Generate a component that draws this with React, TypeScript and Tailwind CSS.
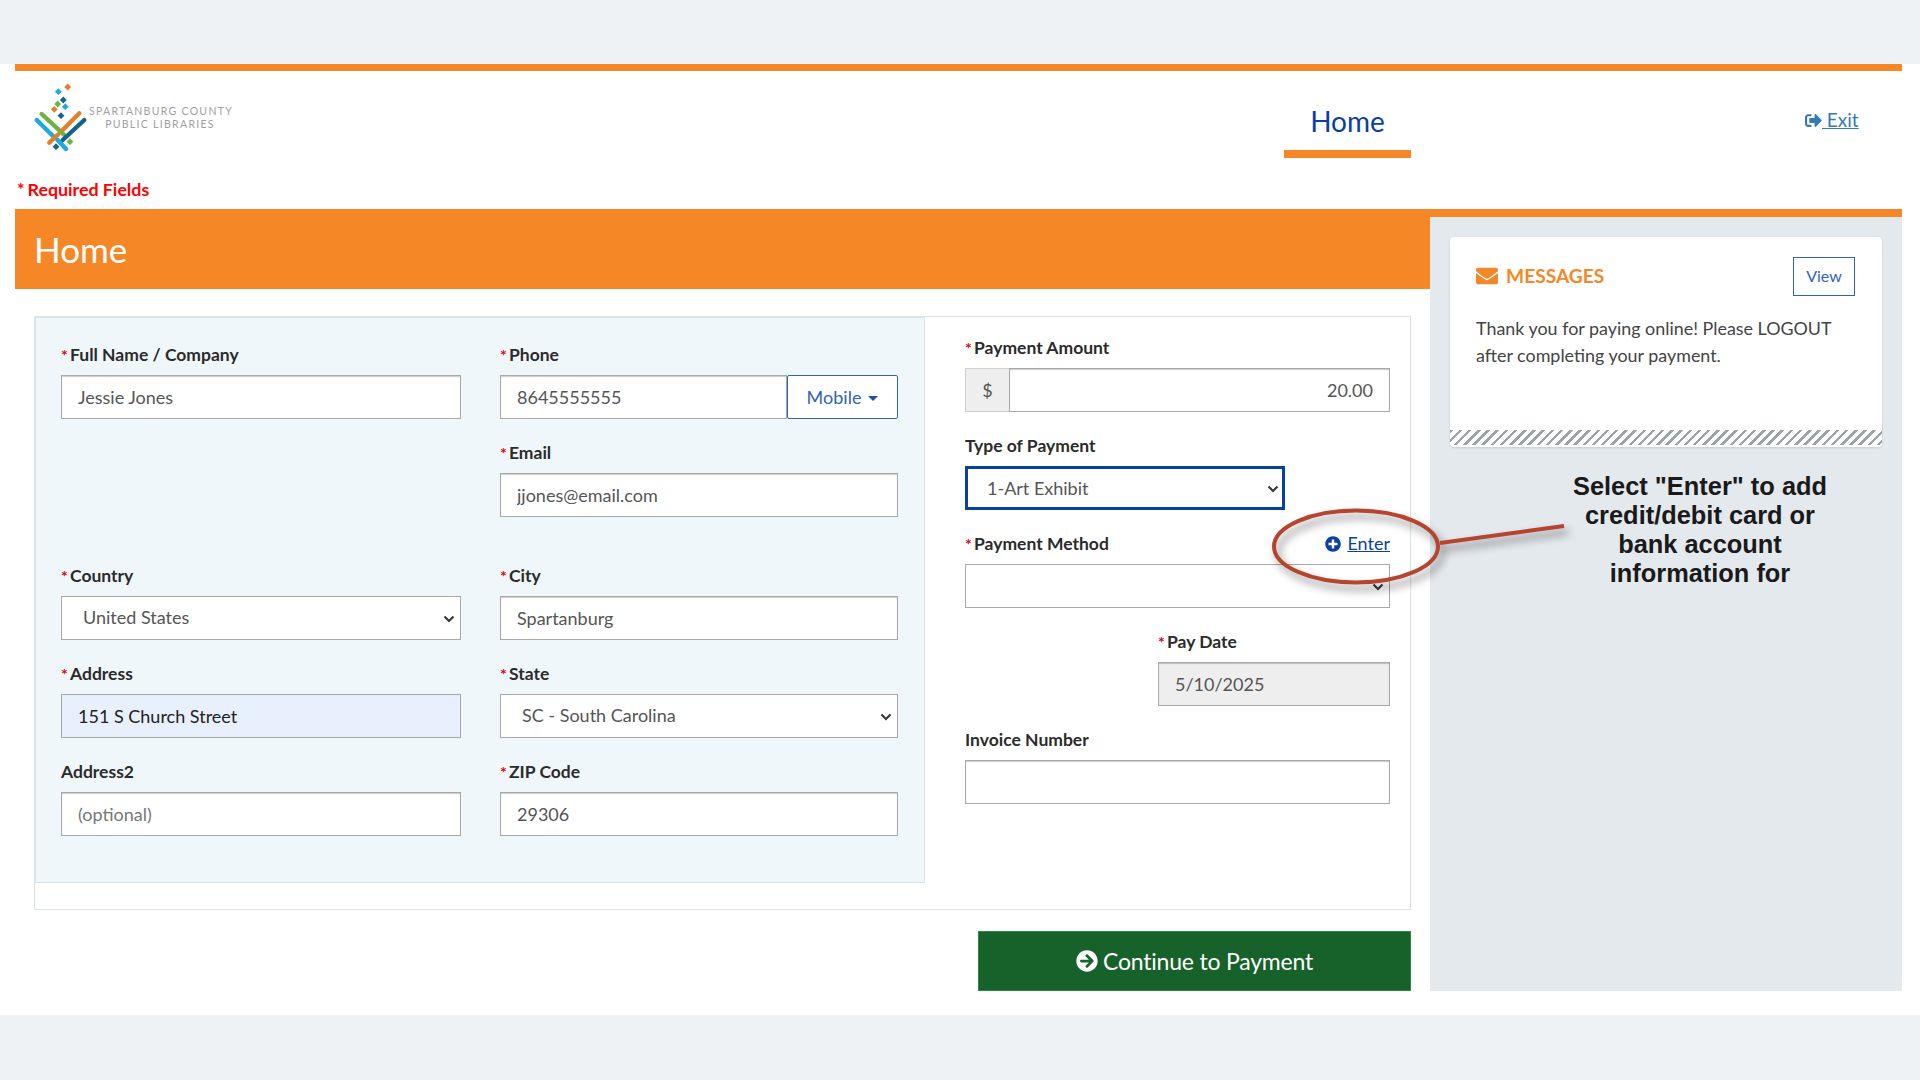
import type { ReactNode } from "react";
import { FaArrowCircleRight, FaEnvelope, FaPlusCircle, FaSignOutAlt } from "react-icons/fa";

const inputClass =
  "h-[44px] w-full border border-[#a8a8a8] bg-white px-4 pb-[1px] text-[18px] text-[#555] shadow-[inset_0_1px_1px_rgba(0,0,0,0.2)] outline-none";
const selectClass =
  "h-[44px] w-full appearance-none border border-[#a8a8a8] bg-white pb-[1px] pl-[21px] text-[18px] text-[#555] outline-none";

function Field({
  label,
  required,
  className,
  extra,
  children,
}: {
  label: string;
  required?: boolean;
  className?: string;
  extra?: ReactNode;
  children: ReactNode;
}) {
  return (
    <div className={className}>
      <div className="mb-2 flex h-[25px] items-center justify-between">
        <label className="text-[17.5px] font-bold leading-[25px] text-[#2b2b2b]">
          {required && <span className="inline-block w-[9px] text-[16px] text-[#e3000f]">*</span>}
          {label}
        </label>
        {extra}
      </div>
      {children}
    </div>
  );
}

function SelectBox({ className, children }: { className?: string; children?: ReactNode }) {
  return (
    <div className="relative">
      <select className={className ?? selectClass}>{children}</select>
      <svg
        viewBox="0 0 12 8"
        className="pointer-events-none absolute right-[6px] top-[19px] h-[8px] w-[12px]"
      >
        <path d="M1.5 1.5L6 6L10.5 1.5" fill="none" stroke="#3a3a3a" strokeWidth="2.2" />
      </svg>
    </div>
  );
}

function Logo() {
  const bars = [
    { d: "M40.7 114L62.7 134.3", c: "#6cb33f" },
    { d: "M35.7 120L54.3 138.3", c: "#1fa9e1" },
    { d: "M78.3 113.3L61.7 130", c: "#e2812d" },
    { d: "M83.3 120L61.7 140", c: "#14638c" },
    { d: "M48.3 142.7L57.3 134.3", c: "#e2812d" },
    { d: "M56.7 140L65 149", c: "#1fa9e1" },
  ];
  const dots = [
    { x: 66.7, y: 87, c: "#e2812d" },
    { x: 57.3, y: 91.7, c: "#1fa9e1" },
    { x: 62.3, y: 100, c: "#14638c" },
    { x: 56.7, y: 104, c: "#6cb33f" },
    { x: 64.3, y: 106.7, c: "#1fa9e1" },
    { x: 53.3, y: 109.3, c: "#e2812d" },
    { x: 60, y: 115.7, c: "#14638c" },
    { x: 55, y: 146.7, c: "#14638c" },
    { x: 69, y: 141.7, c: "#6cb33f" },
  ];
  return (
    <svg viewBox="32 82 56 70" className="mt-[11px] h-[70px] w-[56px] shrink-0">
      {bars.map((b) => (
        <path key={b.d} d={b.d} stroke={b.c} strokeWidth="4.4" strokeLinecap="round" fill="none" />
      ))}
      {dots.map((p) => (
        <rect
          key={`${p.x}-${p.y}`}
          x={p.x - 2.4}
          y={p.y - 2.4}
          width="4.8"
          height="4.8"
          fill={p.c}
          transform={`rotate(45 ${p.x} ${p.y})`}
        />
      ))}
    </svg>
  );
}

export default function App() {
  return (
    <div className="relative flex h-[1080px] w-full flex-col overflow-hidden bg-[#eff2f5] pt-[64px] font-['Lato','Noto_Sans',sans-serif]">
      <div className="h-[951px] bg-white pl-[15px] pr-[18px]">
        <div className="h-[7px] bg-[#f58727]" />

        <header className="h-[138px]">
          <div className="flex h-[87px] items-start">
            <div className="ml-[18px] flex">
              <Logo />
              <div className="mt-[34px] w-[142px] whitespace-nowrap text-center text-[10.5px] leading-[12.5px] tracking-[1.3px] text-[#a0a0a0]">
                <div>SPARTANBURG COUNTY</div>
                <div>PUBLIC LIBRARIES</div>
              </div>
            </div>
            <nav className="ml-[1053px] flex h-[87px] w-[127px] flex-col">
              <a className="flex h-[79px] justify-center pt-[30px] text-[28px] leading-[40px] text-[#0b3fa3]">
                Home
              </a>
              <div className="h-[8px] bg-[#f58727]" />
            </nav>
            <a className="ml-[394px] mt-[37px] flex items-center text-[19px] leading-[24px] text-[#337ab7] underline">
              <FaSignOutAlt className="h-[17px] w-[17px]" />
              <span className="whitespace-pre"> Exit</span>
            </a>
          </div>
          <div className="pl-[2px] pt-[19px] text-[17.8px] font-bold leading-[24px] text-[#ff0000]">
            <span className="mr-[3px]">*</span>Required Fields
          </div>
        </header>

        <div className="flex h-[782px]">
          <main className="flex w-[1415px] flex-col">
            <div className="flex h-[80px] items-center bg-[#f58727] pl-[19px] pt-[1px] text-[35px] text-white">Home</div>

            <div className="ml-[19px] mt-[27px] flex h-[594px] w-[1377px] border border-[#dbe3e6]">
              <section className="h-[566px] w-[890px] border border-[#d3e6ec] bg-[#f0f7fa] pl-[25px] pt-[24px]">
                <div className="grid grid-cols-[400px_398px] gap-x-[39px] gap-y-[21px]">
                  <Field label="Full Name / Company" required>
                    <input className={inputClass} defaultValue="Jessie Jones" />
                  </Field>
                  <Field label="Phone" required>
                    <div className="flex">
                      <input className={inputClass} defaultValue="8645555555" />
                      <button className="flex h-[44px] w-[111px] shrink-0 items-center justify-center gap-[7px] rounded-[2px] border border-[#2f63b8] bg-white text-[18px] text-[#2f63b8]">
                        Mobile
                        <span className="mt-[3px] h-0 w-0 border-x-[5px] border-t-[5px] border-x-transparent border-t-[#1c4fa8]" />
                      </button>
                    </div>
                  </Field>
                  <div />
                  <Field label="Email" required>
                    <input className={inputClass} defaultValue="jjones@email.com" />
                  </Field>
                  <Field label="Country" required className="mt-[25px]">
                    <SelectBox>
                      <option>United States</option>
                    </SelectBox>
                  </Field>
                  <Field label="City" required className="mt-[25px]">
                    <input className={inputClass} defaultValue="Spartanburg" />
                  </Field>
                  <Field label="Address" required>
                    <input
                      className="h-[44px] w-full border border-[#a8a8a8] bg-[#e8f0fe] px-4 pb-[1px] text-[18px] text-[#222] outline-none"
                      defaultValue="151 S Church Street"
                    />
                  </Field>
                  <Field label="State" required>
                    <SelectBox>
                      <option>SC - South Carolina</option>
                    </SelectBox>
                  </Field>
                  <Field label="Address2">
                    <input className={`${inputClass} placeholder:text-[#777]`} placeholder="(optional)" />
                  </Field>
                  <Field label="ZIP Code" required>
                    <input className={inputClass} defaultValue="29306" />
                  </Field>
                </div>
              </section>

              <section className="flex-1 pl-[40px] pr-[20px] pt-[18px]">
                <div className="flex flex-col gap-y-[21px]">
                  <Field label="Payment Amount" required>
                    <div className="flex">
                      <span className="flex h-[44px] w-[44px] shrink-0 items-center justify-center border border-r-0 border-[#cfcfcf] bg-[#eeeeee] text-[18px] text-[#555]">
                        $
                      </span>
                      <input className={`${inputClass} text-right`} defaultValue="20.00" />
                    </div>
                  </Field>
                  <Field label="Type of Payment">
                    <div className="w-[320px]">
                      <SelectBox className="h-[44px] w-full appearance-none border-[3px] border-[#0b3fa3] bg-white pl-[19px] text-[18px] text-[#555] outline-none">
                        <option>1-Art Exhibit</option>
                      </SelectBox>
                    </div>
                  </Field>
                  <Field
                    label="Payment Method"
                    required
                    extra={
                      <a className="flex items-center gap-[6px] text-[18px] leading-[25px] text-[#0b3fa3]">
                        <FaPlusCircle className="h-[16px] w-[16px]" />
                        <span className="underline">Enter</span>
                      </a>
                    }
                  >
                    <SelectBox />
                  </Field>
                  <Field label="Pay Date" required className="ml-[193px]">
                    <input
                      className="h-[44px] w-full border border-[#a8a8a8] bg-[#eeeeee] px-4 text-[18px] text-[#555] shadow-[inset_0_1px_1px_rgba(0,0,0,0.2)] outline-none"
                      defaultValue="5/10/2025"
                      readOnly
                    />
                  </Field>
                  <Field label="Invoice Number">
                    <input className={inputClass} />
                  </Field>
                </div>
              </section>
            </div>

            <div className="mr-[19px] mt-[21px] flex justify-end">
              <button className="flex h-[60px] w-[433px] items-center justify-center gap-[5px] border border-[#2a8a3e] bg-[#17622a] text-[23px] tracking-[-0.2px] text-white">
                <FaArrowCircleRight className="h-[22px] w-[22px]" />
                Continue to Payment
              </button>
            </div>
          </main>

          <aside className="flex-1 border-t-[8px] border-[#f58727] bg-[#e4e9ed] p-[20px]">
            <div className="flex h-[210px] flex-col overflow-hidden rounded-[4px] bg-white shadow-sm">
              <div className="flex items-start justify-between pl-[26px] pr-[27px] pt-[20px]">
                <div className="flex h-[38px] items-center gap-[8px] text-[19.2px] font-bold text-[#f58727]">
                  <FaEnvelope className="h-[22px] w-[22px]" />
                  MESSAGES
                </div>
                <button className="h-[39px] w-[62px] border-[1.5px] border-[#2f63b8] pb-[1px] text-[16px] text-[#2f63b8]">
                  View
                </button>
              </div>
              <p className="mt-[19px] pl-[26px] pr-[27px] text-[17.9px] leading-[26.5px] text-[#444]">
                Thank you for paying online! Please LOGOUT after completing your payment.
              </p>
              <div className="mb-[2px] mt-auto h-[15px] bg-[repeating-linear-gradient(135deg,#9aa5a3_0_2.5px,#ffffff_2.5px_6.5px)]" />
            </div>
            <div className="ml-[68px] mt-[25px] text-center font-['Liberation_Sans',Arial,sans-serif] text-[25.4px] font-bold leading-[29px] text-[#1a1a1a]">
              Select "Enter" to add
              <br />
              credit/debit card or
              <br />
              bank account
              <br />
              information for
            </div>
          </aside>
        </div>
      </div>

      <svg
        viewBox="0 0 310 100"
        className="absolute left-[1265px] top-[500px] h-[100px] w-[310px] drop-shadow-[4px_6px_4px_rgba(0,0,0,0.45)]"
      >
        <ellipse cx="91" cy="46.5" rx="82" ry="36" fill="none" stroke="#b5452f" strokeWidth="4" />
        <path d="M175 43L299 26" fill="none" stroke="#b5452f" strokeWidth="4" />
      </svg>
    </div>
  );
}
